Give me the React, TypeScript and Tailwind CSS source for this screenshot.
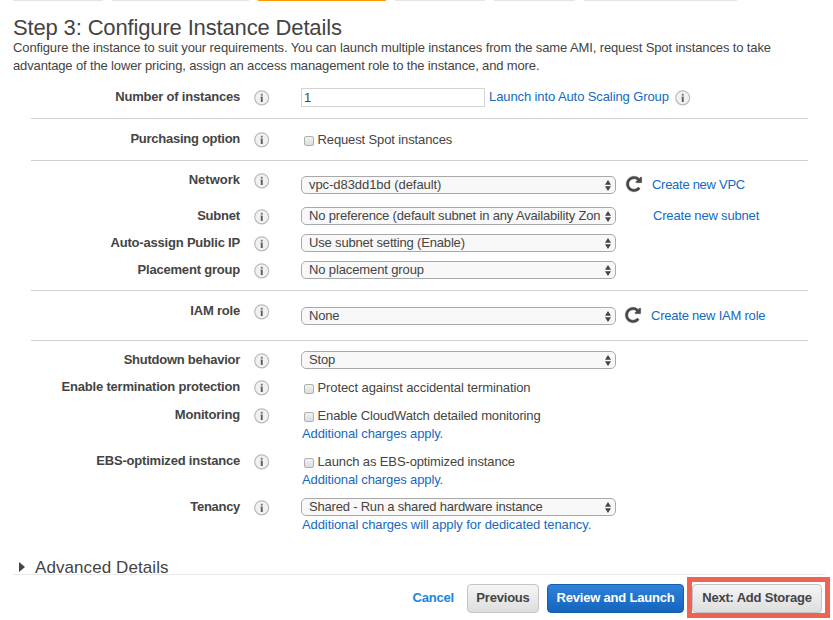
import type { ReactNode } from "react";

function Info({ className = "" }: { className?: string }) {
  return (
    <svg viewBox="0 0 16 16" className={`size-4 shrink-0 ${className}`}>
      <circle cx="7.7" cy="7.8" r="7" fill="#f1f1f1" stroke="#bcbcbc" strokeWidth="1.2" />
      <rect x="6.8" y="3.8" width="1.9" height="1.9" fill="#777" />
      <rect x="6.8" y="6.6" width="1.9" height="5.4" fill="#5c5c5c" />
      <path d="M6 6.8h.8v.8H6z" fill="#aaa" />
    </svg>
  );
}

function Refresh() {
  return (
    <svg viewBox="0 0 1792 1792" className="-mt-px size-[18px] shrink-0">
      <path
        fill="#484848"
        stroke="#484848"
        strokeWidth="40"
        d="M1664 256v448q0 26-19 45t-45 19h-448q-42 0-59-40-17-39 14-69l138-138q-148-137-349-137-104 0-198.5 40.5t-163.5 109.5-109.5 163.5-40.5 198.5 40.5 198.5 109.5 163.5 163.5 109.5 198.5 40.5q119 0 225-52t179-147q7-10 23-12 15 0 25 9l137 138q9 8 9.5 20.5t-7.5 22.5q-109 132-264 204.5t-327 72.5q-156 0-298-61t-245-164-164-245-61-298 61-298 164-245 245-164 298-61q147 0 284.5 55.5t244.5 156.5l130-129q29-31 70-14 39 17 39 59z"
      />
    </svg>
  );
}

function Select({ children, track = "tracking-[-0.17px]" }: { children: ReactNode; track?: string }) {
  return (
    <div className="flex h-[18px] w-[315px] shrink-0 items-center justify-between rounded-[5px] border border-[#a9a9a9] bg-[#f8f8f8] pr-1 pl-[7px]">
      <span className={`leading-4 ${track}`}>{children}</span>
      <svg viewBox="0 0 6 11" className="h-[11px] w-1.5 shrink-0">
        <path d="M3 0l3 4.7H0zM3 11l3-4.7H0z" fill="#444" />
      </svg>
    </div>
  );
}

function Check({ children, track = "tracking-[-0.12px]" }: { children: ReactNode; track?: string }) {
  return (
    <label className="flex h-[19px] items-start pl-[3px] leading-[18px]">
      <span className="mt-1.5 mr-[3.5px] size-[10px] rounded-[2px] border border-[#b0b0b0] bg-linear-to-b from-[#f2f2f2] to-[#dcdcdc]" />
      <span className={`pt-px ${track}`}>{children}</span>
    </label>
  );
}

function Link({ children, className = "tracking-[-0.12px]" }: { children: ReactNode; className?: string }) {
  return <a className={`text-[#146ac0] ${className}`}>{children}</a>;
}

function Row({ label, height, track = "tracking-[-0.2px]", children }: { label: string; height: string; track?: string; children: ReactNode }) {
  return (
    <div className={`flex items-start ${height}`}>
      <div className={`w-[240px] shrink-0 text-right font-bold ${track}`}>{label}</div>
      <Info className="mt-0.5 ml-[14px]" />
      <div className="ml-[31px]">{children}</div>
    </div>
  );
}

function Divider() {
  return <div className="mr-[25px] ml-[31px] h-px bg-[#cfcfcf]" />;
}

export default function App() {
  return (
    <main className="h-[620px] w-[833px] overflow-hidden bg-white font-['Liberation_Sans',Arial,sans-serif] text-[13px] leading-[18px] whitespace-nowrap text-[#444]">
      <div className="flex h-px gap-[9px] pl-[13px]">
        <div className="w-[90px] bg-[#e4e4e4]" />
        <div className="w-[137px] bg-[#e4e4e4]" />
        <div className="w-[128px] bg-[#ff9900]" />
        <div className="w-[90px] bg-[#e4e4e4]" />
        <div className="w-[81px] bg-[#e4e4e4]" />
        <div className="w-[153px] bg-[#e4e4e4]" />
      </div>
      <header className="h-[87px] pt-[15px] pl-[13px]">
        <h1 className="h-[23px] text-[22px] leading-6 tracking-[-0.15px]">Step 3: Configure Instance Details</h1>
        <p>
          <span className="tracking-[-0.12px]">Configure the instance to suit your requirements. You can launch multiple instances from the same AMI, request Spot instances to take</span>
          <br />
          <span className="tracking-[-0.14px]">advantage of the lower pricing, assign an access management role to the instance, and more.</span>
        </p>
      </header>

      <Row label="Number of instances" height="h-[30px]">
        <div className="flex h-[18px] items-center">
          <div className="h-[19px] w-[184px] border border-[#d4d4d4] pl-[2px] leading-[18px]">1</div>
          <Link className="ml-1 tracking-[-0.1px]">Launch into Auto Scaling Group</Link>
          <Info className="mt-0.5 ml-[6px]" />
        </div>
      </Row>
      <Divider />
      <div className="pt-[11px]">
        <Row label="Purchasing option" height="h-[30px]" track="tracking-[-0.27px]"><Check>Request Spot instances</Check></Row>
      </div>
      <Divider />
      <div className="pt-[10px]">
        <Row label="Network" height="h-[36px]" track="">
          <div className="flex items-center pt-[5px]">
            <Select track="tracking-[-0.06px]">vpc-d83dd1bd (default)</Select>
            <div className="mr-[9.5px] ml-[8.5px] h-[18px]"><Refresh /></div>
            <Link className="tracking-[-0.28px]">Create new VPC</Link>
          </div>
        </Row>
        <Row label="Subnet" height="h-[27px]">
          <div className="flex items-center">
            <Select>No preference (default subnet in any Availability Zon</Select>
            <Link className="ml-[37px] tracking-[-0.18px]">Create new subnet</Link>
          </div>
        </Row>
        <Row label="Auto-assign Public IP" height="h-[27px]"><Select>Use subnet setting (Enable)</Select></Row>
        <Row label="Placement group" height="h-[29px]"><Select track="tracking-[-0.12px]">No placement group</Select></Row>
      </div>
      <Divider />
      <div className="pt-[11px]">
        <Row label="IAM role" height="h-[38px]">
          <div className="flex items-center pt-[5px]">
            <Select>None</Select>
            <div className="mr-[9.5px] ml-[7.5px] h-[18px]"><Refresh /></div>
            <Link className="tracking-[-0.22px]">Create new IAM role</Link>
          </div>
        </Row>
      </div>
      <Divider />
      <div className="pt-[10px]">
        <Row label="Shutdown behavior" height="h-[27px]" track="tracking-[-0.25px]"><Select>Stop</Select></Row>
        <Row label="Enable termination protection" height="h-[28px]"><Check track="tracking-[-0.1px]">Protect against accidental termination</Check></Row>
        <Row label="Monitoring" height="h-[46px]">
          <Check track="tracking-[-0.13px]">Enable CloudWatch detailed monitoring</Check>
          <Link className="ml-px tracking-[-0.13px]">Additional charges apply.</Link>
        </Row>
        <Row label="EBS-optimized instance" height="h-[46px]">
          <Check track="tracking-[-0.13px]">Launch as EBS-optimized instance</Check>
          <Link className="ml-px tracking-[-0.13px]">Additional charges apply.</Link>
        </Row>
        <Row label="Tenancy" height="h-[60px]" track="tracking-[-0.3px]">
          <Select track="tracking-[-0.2px]">Shared - Run a shared hardware instance</Select>
          <Link className="ml-px tracking-[-0.09px]">Additional charges will apply for dedicated tenancy.</Link>
        </Row>
      </div>

      <div className="ml-[13px] flex h-[17px] w-[812px] items-start border-b border-[#e8e8e8] pl-1.5">
        <svg viewBox="0 0 6 10" className="mt-1 h-[10px] w-1.5"><path d="M0 0l6 5-6 5z" fill="#444" /></svg>
        <span className="ml-[10px] text-[17px] leading-5 tracking-[0.08px]">Advanced Details</span>
      </div>
      <footer className="flex h-[45px] items-center justify-end pr-[3px] font-bold tracking-[-0.2px]">
        <a className="mr-[13px] text-[#2182e0]">Cancel</a>
        <button className="mt-0.5 h-[29px] w-[72px] rounded-[4px] border border-[#c4c4c4] bg-linear-to-b from-[#f5f5f5] to-[#dedede] pb-0.5">Previous</button>
        <button className="mt-0.5 mr-[3px] ml-2 h-[29px] w-[137px] rounded-[4px] border border-[#1560ac] bg-linear-to-b from-[#2e82da] to-[#1264bc] pb-0.5 text-white">Review and Launch</button>
        <div className="flex h-[41px] w-[143px] items-center border-5 border-[#f06354]">
          <button className="mt-0.5 h-[29px] w-[130px] rounded-[4px] border border-[#c4c4c4] bg-linear-to-b from-[#f5f5f5] to-[#dedede] pb-0.5">Next: Add Storage</button>
        </div>
      </footer>
    </main>
  );
}
